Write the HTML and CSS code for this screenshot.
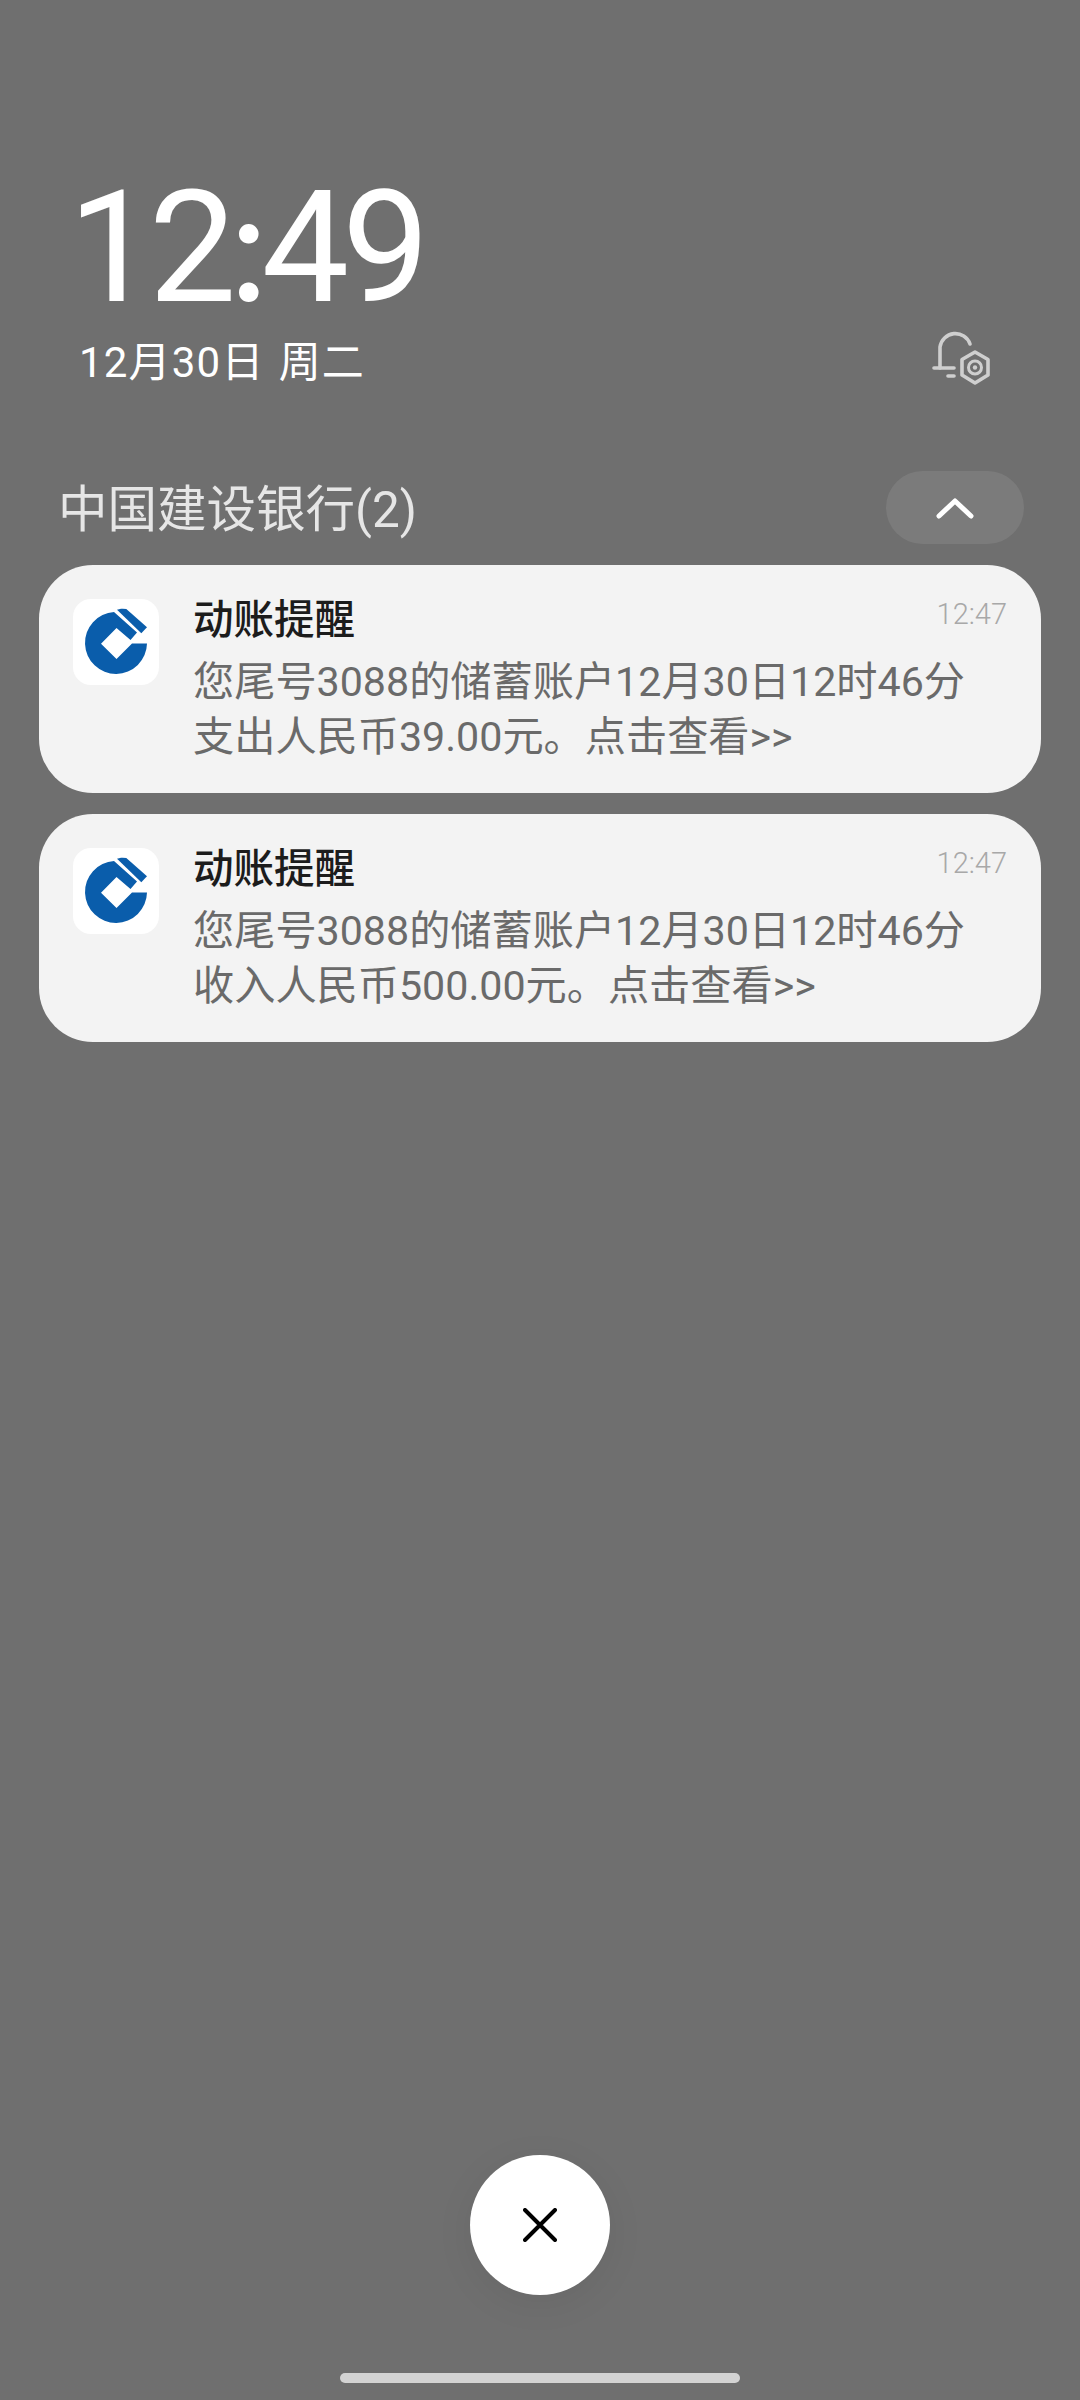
FILE: index.html
```html
<!DOCTYPE html>
<html lang="zh-CN">
<head>
<meta charset="utf-8">
<title>通知</title>
<link rel="stylesheet" href="styles.css">
</head>
<body>
<main class="screen">
  <header class="clock-block">
    <div class="clock">12<span class="colon">:</span>49</div>
    <div class="date-row">
      <div class="date"><span>12月30日</span><span>周二</span></div>
      <svg class="bell" viewBox="0 0 60 56" fill="none" stroke="#cfcfcf" stroke-width="3.6" stroke-linecap="round" stroke-linejoin="round">
        <path d="M8 38V17A15.5 15.5 0 0 1 38 14"/>
        <path d="M2 38H22"/>
        <path d="M16 46H22"/>
        <path d="M43 22L56 29.5V45L43 53L30 45V29.5Z"/>
        <circle cx="43" cy="37.5" r="6.5" stroke-width="3"/>
        <circle cx="43" cy="37.5" r="2.2" fill="#cfcfcf" stroke="none"/>
      </svg>
    </div>
  </header>
  <section class="group">
    <div class="group-head">
      <h2 class="group-title">中国建设银行(2)</h2>
      <button class="collapse" type="button">
        <svg class="chev" viewBox="0 0 40 24" fill="none" stroke="#fff" stroke-width="5" stroke-linecap="round" stroke-linejoin="round"><path d="M4 20L20 5L36 20"/></svg>
      </button>
    </div>
    <article class="card">
      <svg class="app-icon" viewBox="0 0 86 86"><rect width="86" height="86" rx="18" fill="#fff"/><path fill="#0a5dab" d="M41 13A31 31 0 1 0 74 44.5H59L43.5 60 28 44.7 43.5 29 57.5 41 64 33.5Z"/><path fill="#0a5dab" d="M44 10.7L48 9.7Q51 9.5 53.3 10L74 28.3 68.3 34.3Z"/></svg>
      <div class="card-body">
        <div class="card-top"><h3 class="card-title">动账提醒</h3><time class="card-time">12:47</time></div>
        <p class="card-text">您尾号3088的储蓄账户12月30日12时46分<br>支出人民币39.00元。点击查看&gt;&gt;</p>
      </div>
    </article>
    <article class="card">
      <svg class="app-icon" viewBox="0 0 86 86"><rect width="86" height="86" rx="18" fill="#fff"/><path fill="#0a5dab" d="M41 13A31 31 0 1 0 74 44.5H59L43.5 60 28 44.7 43.5 29 57.5 41 64 33.5Z"/><path fill="#0a5dab" d="M44 10.7L48 9.7Q51 9.5 53.3 10L74 28.3 68.3 34.3Z"/></svg>
      <div class="card-body">
        <div class="card-top"><h3 class="card-title">动账提醒</h3><time class="card-time">12:47</time></div>
        <p class="card-text">您尾号3088的储蓄账户12月30日12时46分<br>收入人民币500.00元。点击查看&gt;&gt;</p>
      </div>
    </article>
  </section>
  <footer class="bottom">
    <button class="close" type="button">
      <svg class="x" viewBox="0 0 34 34" fill="none" stroke="#000" stroke-width="4" stroke-linecap="round"><path d="M2 2L32 32M32 2L2 32"/></svg>
    </button>
    <div class="home-bar"></div>
  </footer>
</main>
</body>
</html>
```
FILE: styles.css
```css
* { box-sizing: border-box; }
html, body { margin: 0; padding: 0; }
body { background: #6f6f6f; font-family: Roboto, "Noto Sans CJK SC", sans-serif; }
.screen { width: 1080px; height: 2400px; display: flex; flex-direction: column; background: #6f6f6f; overflow: hidden; }
.clock-block { padding: 163px 88px 0 68px; }
.clock { font: 400 156px/1 Roboto, "Noto Sans CJK SC", sans-serif; color: #fff; letter-spacing: -7px; height: 156px; }
.colon { font-family: Lato, sans-serif; }
.date-row { display: flex; justify-content: space-between; align-items: flex-start; margin-top: 16px; padding-left: 11px; }
.date { display: flex; gap: 14px; font-size: 42px; line-height: 56px; color: #fff; font-weight: 400; letter-spacing: 1.2px; }
.bell { width: 60px; height: 56px; margin-top: -5px; }
.group { padding: 0 39px; margin-top: 80px; display: flex; flex-direction: column; }
.group-head { display: flex; justify-content: space-between; align-items: center; padding: 0 17px 0 19px; height: 73px; margin-bottom: 21px; }
.group-title { margin: 0 0 5px; font-size: 49.5px; font-weight: 400; color: #e6e6e6; }
.collapse { width: 138px; height: 73px; border: 0; border-radius: 37px; background: #7b7b7b; display: flex; align-items: center; justify-content: center; padding: 0; }
.chev { width: 40px; height: 24px; }
.card { height: 228px; border-radius: 54px; background: #f3f3f3; display: flex; padding: 34px 34px 0; gap: 34px; margin-bottom: 21px; }
.app-icon { width: 86px; height: 86px; flex: none; }
.card-body { flex: 1; min-width: 0; }
.card-top { display: flex; justify-content: space-between; align-items: flex-start; }
.card-title { margin: 0; font-size: 40.5px; line-height: 42px; font-weight: 500; color: #1c1c1c; }
.card-time { font-size: 29px; line-height: 30px; color: #a8a8a8; font-weight: 300; }
.card-text { margin: 14px 0 0; font-size: 41.2px; line-height: 55px; color: #6a6a6a; font-weight: 400; white-space: nowrap; }
.bottom { margin-top: auto; display: flex; flex-direction: column; align-items: center; padding-bottom: 17px; }
.close { width: 140px; height: 140px; border-radius: 50%; border: 0; background: #fff; padding: 0; display: flex; align-items: center; justify-content: center; box-shadow: 0 8px 40px rgba(0,0,0,.06); }
.x { width: 34px; height: 34px; }
.home-bar { width: 400px; height: 10px; border-radius: 5px; background: #d3d3d3; margin-top: 78px; }
```
